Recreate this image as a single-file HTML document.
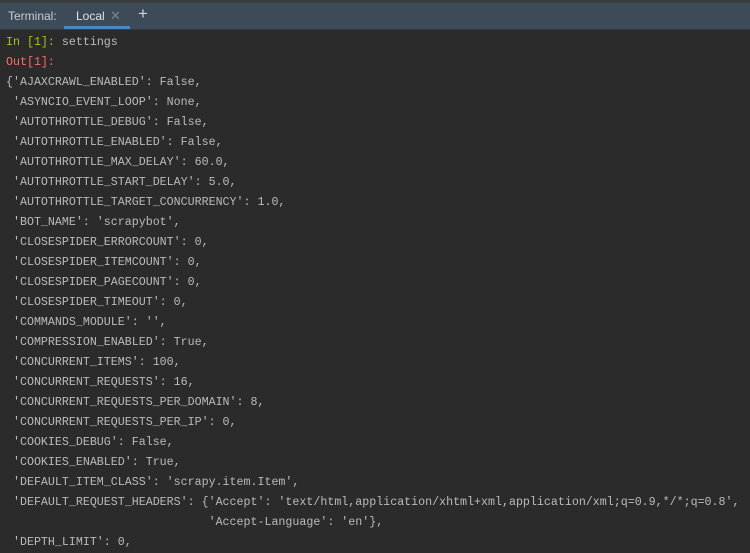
<!DOCTYPE html>
<html><head><style>
body{margin:0;width:750px;height:553px;background:#2b2b2b;overflow:hidden;font-family:"Liberation Sans",sans-serif}
.top{height:3px;background:#3a3d40}
.bar{position:relative;height:26px;background:#3d4a58;border-bottom:1px solid #333a42;color:#c8cdd3;font-size:12px}
.bar span{position:absolute;top:6px}
.ul{position:absolute;left:64px;width:66px;top:23px;height:3px;background:#4a88c7}
pre{margin:0;position:absolute;top:33px;left:6px;font-family:"Liberation Mono",monospace;font-size:11.65px;line-height:20px;color:#bbbbbb}
.g{color:#a8c023}.r{color:#ff6b68}
</style></head><body>
<div class="top"></div>
<div class="bar">
<span style="left:8px">Terminal:</span>
<span style="left:76px;color:#dde2e8">Local</span>
<span style="left:110px;color:#7b8794;font-size:13px;top:5px">✕</span>
<span style="left:138px;font-size:17px;top:1px;color:#d0d4d8">+</span>
<div class="ul"></div>
</div>
<pre><span class="g">In [1]:</span> settings
<span class="r">Out[1]:</span>
{'AJAXCRAWL_ENABLED': False,
 'ASYNCIO_EVENT_LOOP': None,
 'AUTOTHROTTLE_DEBUG': False,
 'AUTOTHROTTLE_ENABLED': False,
 'AUTOTHROTTLE_MAX_DELAY': 60.0,
 'AUTOTHROTTLE_START_DELAY': 5.0,
 'AUTOTHROTTLE_TARGET_CONCURRENCY': 1.0,
 'BOT_NAME': 'scrapybot',
 'CLOSESPIDER_ERRORCOUNT': 0,
 'CLOSESPIDER_ITEMCOUNT': 0,
 'CLOSESPIDER_PAGECOUNT': 0,
 'CLOSESPIDER_TIMEOUT': 0,
 'COMMANDS_MODULE': '',
 'COMPRESSION_ENABLED': True,
 'CONCURRENT_ITEMS': 100,
 'CONCURRENT_REQUESTS': 16,
 'CONCURRENT_REQUESTS_PER_DOMAIN': 8,
 'CONCURRENT_REQUESTS_PER_IP': 0,
 'COOKIES_DEBUG': False,
 'COOKIES_ENABLED': True,
 'DEFAULT_ITEM_CLASS': 'scrapy.item.Item',
 'DEFAULT_REQUEST_HEADERS': {'Accept': 'text/html,application/xhtml+xml,application/xml;q=0.9,*/*;q=0.8',
                             'Accept-Language': 'en'},
 'DEPTH_LIMIT': 0,</pre>
</body></html>
